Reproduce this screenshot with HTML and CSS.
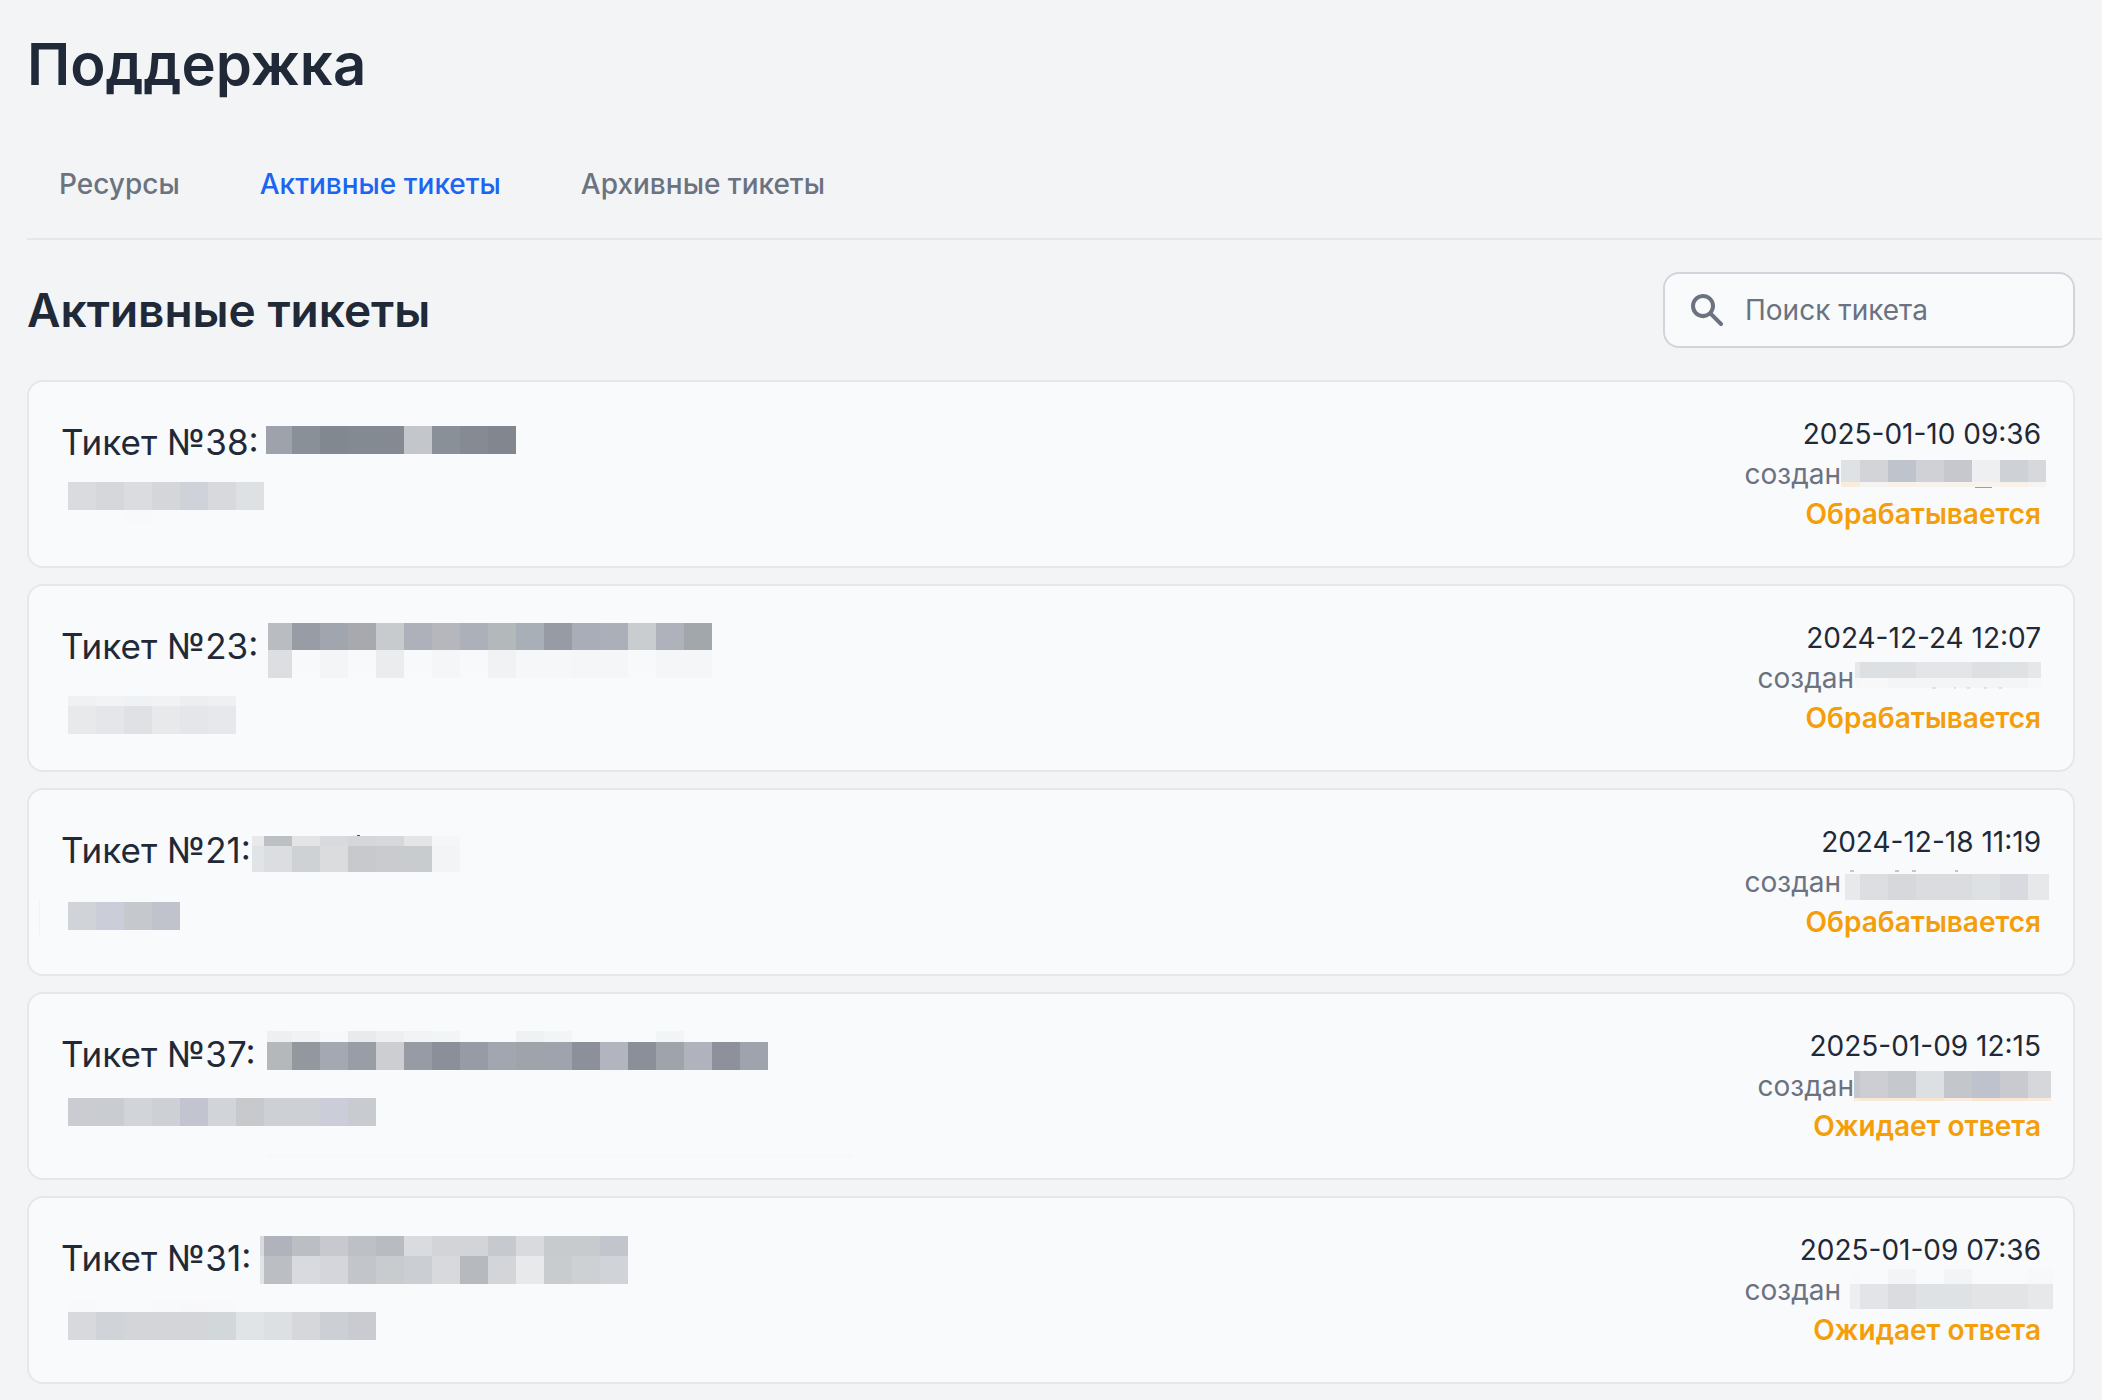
FILE: index.html
```html
<!DOCTYPE html>
<html lang="ru">
<head>
  <meta charset="UTF-8">
  <meta name="viewport" content="width=device-width, initial-scale=1.0">
  <title>Поддержка</title>
  <link rel="stylesheet" href="styles.css">
</head>
<body>
  <main class="page">
    <h1 class="page-title">Поддержка</h1>

    <nav class="tabs">
      <a class="tab" href="#resources">Ресурсы</a>
      <a class="tab active" href="#active">Активные тикеты</a>
      <a class="tab" href="#archive">Архивные тикеты</a>
    </nav>

    <section class="tickets">
      <div class="tickets-header">
        <h2 class="tickets-title">Активные тикеты</h2>
        <div class="search">
          <svg class="search-icon" viewBox="0 0 20 20" fill="currentColor" aria-hidden="true">
            <path fill-rule="evenodd" clip-rule="evenodd" d="M8 4a4 4 0 100 8 4 4 0 000-8zM2 8a6 6 0 1110.89 3.476l4.817 4.817a1 1 0 01-1.414 1.414l-4.816-4.816A6 6 0 012 8z"/>
          </svg>
          <input class="search-input" type="text" id="search" placeholder="Поиск тикета" aria-label="Поиск тикета">
        </div>
      </div>

      <div class="ticket-list">
        <article class="ticket">
          <div class="ticket-info">
            <h3 class="ticket-name">Тикет №38:</h3>
            <svg class="mask" aria-hidden="true">
              <g data-row="205 455 26 12 28" data-cells="#9ea3ab #8a9098 #81888f #838a91 #858a92 #c3c6ca #8a9098 #868a93 #82868f"></g>
              <g data-row="7 203 28 68 28" data-cells="#dadbdf #d6d7db #dbdce0 #d5d6da #cfd2d8 #d8d9dd #dde1e3"></g>
              <g data-row="63 91 28 96 14" data-cells="#f8f9fb"></g>
            </svg>
          </div>
          <div class="ticket-meta">
            <time class="ticket-date">2025-01-10 09:36</time>
            <div class="ticket-author">
              <span>создан</span>
              <svg class="author-mask" aria-hidden="true">
                <g data-row="0 205 19 6 22" data-cells="#dee2e5 #d3d4d8 #bfc4cc #cfd1d6 #c7c8cd #eeeff1 #ced1d6 #d7d8dc"></g>
                <g data-row="0 205 19 28 5" data-cells="#f9ecdc #f5f4f2 #f8f1e8 #f8f3ee #f8f2ec #f8f3ee #f9f2e8 #f7f5f3"></g>
                <rect x="134" y="33" width="17" height="1" fill="#9aa0a8"/>
              </svg>
            </div>
            <strong class="ticket-status">Обрабатывается</strong>
          </div>
        </article>

        <article class="ticket">
          <div class="ticket-info">
            <h3 class="ticket-name">Тикет №23:</h3>
            <svg class="mask" aria-hidden="true">
              <g data-row="207 651 24 5 27" data-cells="#b9bcc1 #989da5 #a1a6ae #a7a9ae #c8cbcd #afb1ba #b5b7bc #abb0b9 #b3b8bb #a9afb7 #979ca4 #a8adb7 #abb0b8 #cacdcf #afb2bb #a2a7ab"></g>
              <g data-row="207 651 24 32 28" data-cells="#dddee2 #f8f9fb #f4f5f7 #f8f9fb #ebecee #f8f9fb #f5f6f8 #f8f9fb #f1f2f4 #f6f7f9 #f6f7f9 #f5f6f8 #f5f6f8 #f8f9fb #f5f6f8 #f5f6f8"></g>
              <g data-row="7 175 28 78 10" data-cells="#f0f1f3 #f2f3f5 #eef2f4 #f1f2f4 #edeef0 #eff0f2"></g>
              <g data-row="7 175 28 88 28" data-cells="#e8e9eb #e4e6ea #e0e1e5 #e8e9eb #e4e6ea #e7e8ec"></g>
            </svg>
          </div>
          <div class="ticket-meta">
            <time class="ticket-date">2024-12-24 12:07</time>
            <div class="ticket-author">
              <span>создан</span>
              <svg class="author-mask short" aria-hidden="true">
                <g data-row="1 187 5 4 16" data-cells="#e6e8ea #dce0e3 #dce0e3 #e4e5e9 #e4e5e8 #dedfe2 #dfe2e5 #e6e7e9"></g>
                <g data-row="1 187 5 20 10" data-cells="#f6f7f9 #f8f8f9 #f4f5f7 #f4f5f7 #f4f5f7 #f4f5f7 #f4f5f7 #f7f8fa"></g>
                <path d="M78 30h4M100 30h2M113 30h3M130 30h3M145 30h3" stroke="#c9ccd1"/>
              </svg>
            </div>
            <strong class="ticket-status">Обрабатывается</strong>
          </div>
        </article>

        <article class="ticket">
          <div class="ticket-info">
            <h3 class="ticket-name">Тикет №21:</h3>
            <svg class="mask" aria-hidden="true">
              <rect x="296" y="13" width="3" height="1" fill="#4b5563"/>
              <g data-row="191 399 12 14 10" data-cells="#e8e9eb #bcc0c5 #e3e4e6 #d9dade #d5d6db #d7d8dd #e4e5e7 #f5f6f8"></g>
              <g data-row="191 399 12 24 26" data-cells="#e0e4e7 #dcdde0 #ced2d5 #dbdcde #c8c9cd #c9cbcf #c9cccf #f3f4f6"></g>
              <g data-row="7 119 28 80 28" data-cells="#d0d3d8 #cbced8 #c5c8cc #c0c3cc"></g>
              <rect x="-22" y="76" width="1" height="37" fill="#f2f3f5"/>
            </svg>
          </div>
          <div class="ticket-meta">
            <time class="ticket-date">2024-12-18 11:19</time>
            <div class="ticket-author">
              <span>создан</span>
              <svg class="author-mask" aria-hidden="true">
                <path d="M9 9h4M54 9h4M71 9h4M114 9h3" stroke="#8b9099"/>
                <g data-row="4 208 15 12 26" data-cells="#e8e9eb #dddee2 #d7d8dc #dbdce0 #dbdce0 #dde1e4 #d9dadf #e7e8ea"></g>
              </svg>
            </div>
            <strong class="ticket-status">Обрабатывается</strong>
          </div>
        </article>

        <article class="ticket">
          <div class="ticket-info">
            <h3 class="ticket-name">Тикет №37:</h3>
            <svg class="mask" aria-hidden="true">
              <g data-row="206 707 25 5 11" data-cells="#eeeff1 #f1f2f4 #f7f8fa #e9eaec #eeeff1 #f2f3f5 #f1f5f6 none none #eef2f3 #f1f5f6 none none none #f1f5f6"></g>
              <g data-row="206 707 25 16 28" data-cells="#b5b8bb #93989e #a3a8b1 #989da6 #cdced2 #979ba4 #8b8f99 #979ba5 #a2a6ae #9fa3aa #9fa3ab #8c909a #b2b5be #8b8f98 #9fa4ab #b0b3bc #8e919b #9fa3ab"></g>
              <g data-row="7 315 28 72 28" data-cells="#cbccd1 #c9ccd0 #d1d4d9 #cdd0d5 #c2c5cf #d1d4d9 #c8c9cd #cdd0d5 #cdd0d5 #cbced8 #c8cbcf"></g>
              <rect x="206" y="128" width="586" height="3" fill="#f7f8fa"/>
            </svg>
          </div>
          <div class="ticket-meta">
            <time class="ticket-date">2025-01-09 12:15</time>
            <div class="ticket-author">
              <span>создан</span>
              <svg class="author-mask short" aria-hidden="true">
                <g data-row="0 197 6 5 27" data-cells="#c4c7cc #cdced3 #c5c8cc #dce0e3 #c3c6cb #bdc2cc #c8cad0 #d6d7db"></g>
                <g data-row="0 197 6 32 3" data-cells="#f8ebdf #f8e8d8 #f9e9d8 #f9e6d2 #f9ebdd #f9e6d2 #f9e8d6 #f9ecdf"></g>
              </svg>
            </div>
            <strong class="ticket-status">Ожидает ответа</strong>
          </div>
        </article>

        <article class="ticket">
          <div class="ticket-info">
            <h3 class="ticket-name">Тикет №31:</h3>
            <svg class="mask" aria-hidden="true">
              <g data-row="199 567 4 6 20" data-cells="#d9dade #b0b3bc #bbbfc4 #c8c9ce #bdc1c6 #b8bcc1 #dadbdf #d3d4d8 #d3d4d8 #c6c9ce #d9dade #c7cbcd #c7cbcd #c2c5cb"></g>
              <g data-row="199 567 4 26 28" data-cells="#e0e4e7 #bbbfc4 #d9dadf #d5d6db #c2c6cb #c8cccf #cbcfd4 #d8d9dd #b6babe #d4d5d9 #e8e9eb #c8cccf #cdd1d4 #d0d3d8"></g>
              <g data-row="7 175 28 71 11" data-cells="#f8f9fb none none #f8f9fb #f8f8fa #f8f9fb"></g>
              <g data-row="7 315 28 82 28" data-cells="#d8d9dd #d0d4d9 #d4d5d9 #d4d5d9 #d4d5d9 #d2d7da #e0e4e7 #dce0e3 #d6d7db #cccfd4 #cacbd0"></g>
            </svg>
          </div>
          <div class="ticket-meta">
            <time class="ticket-date">2025-01-09 07:36</time>
            <div class="ticket-author">
              <span>создан</span>
              <svg class="author-mask" aria-hidden="true">
                <g data-row="9 212 10 -1 15" data-cells="#f8f9fb none #f3f4f6 none #f3f4f6 none none #f7f8fa"></g>
                <g data-row="9 212 10 14 25" data-cells="#edeef0 #e3e4e8 #dbdce0 #dee2e5 #dee2e5 #e3e4e6 #e3e4e6 #e7e8ea"></g>
              </svg>
            </div>
            <strong class="ticket-status">Ожидает ответа</strong>
          </div>
        </article>
      </div>
    </section>
  </main>

  <script src="script.js"></script>
</body>
</html>
```
FILE: styles.css
```css
/* Basic styles */
* {
  box-sizing: border-box;
}
body {
  margin: 0;
  background-color: #f3f4f6;
  color: #1f2937;
  font-family: Inter, "Noto Sans", sans-serif;
  font-size: 28px;
  line-height: 40px;
}
h1,
h2,
h3 {
  margin: 0;
}
.page {
  padding: 28px 0 16px 27px;
}
.page-title {
  margin-bottom: 32px;
  font-size: 58px;
  font-weight: 600;
  line-height: 72px;
}

/* Tabs */
.tabs {
  display: flex;
  gap: 16px;
  border-bottom: 2px solid #e5e7eb;
}
.tab {
  padding: 32px;
  border-bottom: 2px solid transparent;
  color: #6b7280;
  font-weight: 500;
  text-decoration: none;
}
.tab.active {
  color: #1c64f2;
}

/* Header with search */
.tickets {
  padding: 32px 27px 0 0;
}
.tickets-header {
  display: flex;
  justify-content: space-between;
  align-items: center;
  margin-bottom: 32px;
}
.tickets-title {
  font-size: 46px;
  font-weight: 600;
  line-height: 64px;
}
.search {
  position: relative;
  width: 412px;
}
.search-icon {
  position: absolute;
  top: 18px;
  left: 24px;
  width: 40px;
  height: 40px;
  color: #6b7280;
}
.search-input {
  display: block;
  width: 100%;
  height: 76px;
  padding: 16px 16px 16px 80px;
  border: 2px solid #d1d5db;
  border-radius: 16px;
  background-color: #f9fafc;
  color: #1f2937;
  font: inherit;
}
.search-input::placeholder {
  color: #6b7280;
  opacity: 1;
}

/* Tickets */
.ticket-list {
  display: flex;
  flex-direction: column;
  gap: 16px;
}
.ticket {
  display: flex;
  justify-content: space-between;
  padding: 32px;
  border: 2px solid #e5e7eb;
  border-radius: 16px;
  background-color: #f9fafc;
}
.ticket-info {
  position: relative;
}
.ticket-name {
  font-size: 35px;
  font-weight: 400;
  line-height: 56px;
}
.ticket-meta {
  display: flex;
  flex-direction: column;
  align-items: flex-end;
}
.ticket-author {
  display: flex;
  color: #6b7280;
}
.ticket-status {
  color: #f59e0b;
  font-weight: 600;
}

/* Hidden names */
.mask {
  position: absolute;
  top: 0;
  left: 0;
  width: 100%;
  height: 100%;
  overflow: visible;
}
.author-mask {
  width: 200px;
  height: 40px;
  overflow: visible;
}
.author-mask.short {
  width: 187px;
}
```
FILE: script.js
```js
// Draw the mosaic rows: data-row is "start end firstWidth top height"
const CELL = 28;

document.querySelectorAll('g[data-row]').forEach((group) => {
  const [start, end, first, top, height] = group.dataset.row.split(' ').map(Number);
  let x = start;

  group.dataset.cells.split(' ').forEach((color, i) => {
    const width = Math.min(i === 0 ? first : CELL, end - x);
    const rect = document.createElementNS('http://www.w3.org/2000/svg', 'rect');
    rect.setAttribute('x', x);
    rect.setAttribute('y', top);
    rect.setAttribute('width', width);
    rect.setAttribute('height', height);
    rect.setAttribute('fill', color);
    group.appendChild(rect);
    x += width;
  });
});
```
